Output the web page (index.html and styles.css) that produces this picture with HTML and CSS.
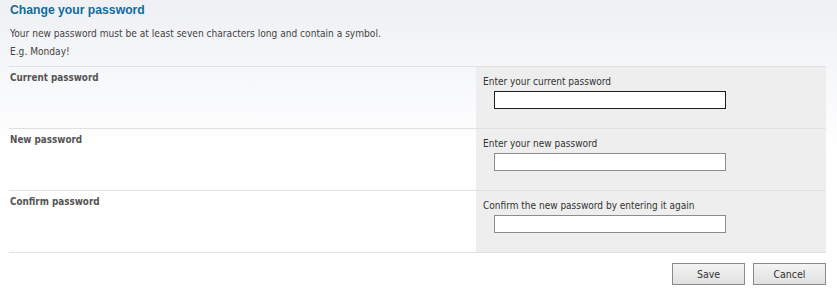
FILE: index.html
```html
<!DOCTYPE html>
<html>
<head>
<meta charset="utf-8">
<link rel="stylesheet" href="styles.css">
</head>
<body>
<div class="page">
  <h1 class="title">Change your password</h1>
  <p class="intro">Your new password must be at least seven characters long and contain a symbol.</p>
  <p class="intro">E.g. Monday!</p>
  <div class="form">
    <div class="row">
      <div class="label">Current password</div>
      <div class="field">
        <div class="hint">Enter your current password</div>
        <input class="box focused" type="password">
      </div>
    </div>
    <div class="row">
      <div class="label">New password</div>
      <div class="field">
        <div class="hint">Enter your new password</div>
        <input class="box" type="password">
      </div>
    </div>
    <div class="row">
      <div class="label">Confirm password</div>
      <div class="field">
        <div class="hint">Confirm the new password by entering it again</div>
        <input class="box" type="password">
      </div>
    </div>
  </div>
  <div class="actions">
    <button class="btn">Save</button>
    <button class="btn">Cancel</button>
  </div>
</div>
</body>
</html>
```
FILE: styles.css
```css
html, body {
  margin: 0;
  padding: 0;
}
body {
  width: 837px;
  height: 292px;
  background: linear-gradient(to bottom, #eef0f4 0px, #f8f9fb 90px, #ffffff 150px);
  font-family: Tahoma, "DejaVu Sans Condensed", "Liberation Sans", sans-serif;
  font-size: 10px;
  color: #444;
}
.page {
  padding: 0 11px 0 9px;
}
.title {
  margin: 0;
  padding: 3px 0 0 1px;
  height: 18px;
  font-family: "Liberation Sans", Arial, sans-serif;
  font-size: 12.2px;
  font-weight: bold;
  color: #0f6c9d;
  line-height: 15px;
}
.intro {
  margin: 0;
  padding-left: 1px;
  line-height: 18px;
  font-size: 10.1px;
}
.intro:first-of-type {
  margin-top: 4px;
}
.form {
  margin-top: 5px;
  border-top: 1px solid #e0e1e3;
}
.row {
  display: flex;
  height: 61px;
  border-bottom: 1px solid #e0e1e3;
}
.label {
  width: 466px;
  padding: 5px 0 0 1px;
  font-family: "DejaVu Sans Condensed", "Liberation Sans", sans-serif;
  font-weight: bold;
  font-size: 9.8px;
  color: #555;
}
.field {
  flex: 1;
  background: #eeeeee;
  padding: 8px 0 0 7px;
}
.hint {
  color: #333;
  line-height: 14px;
}
.box {
  display: block;
  box-sizing: border-box;
  margin: 2px 0 0 11px;
  width: 232px;
  height: 18px;
  border: 1px solid #8c8c8c;
  background: #fff;
  padding: 0;
  outline: none;
}
.box.focused {
  border-color: #1e1e1e;
}
.actions {
  display: flex;
  justify-content: flex-end;
  gap: 8px;
  margin-top: 10px;
}
.btn {
  box-sizing: border-box;
  width: 73px;
  height: 22px;
  border: 1px solid #8a8a8a;
  background: linear-gradient(to bottom, #f4f4f4, #e0e0e0);
  font-family: Tahoma, "DejaVu Sans Condensed", "Liberation Sans", sans-serif;
  font-size: 10.5px;
  color: #333;
  padding: 0;
}
```
